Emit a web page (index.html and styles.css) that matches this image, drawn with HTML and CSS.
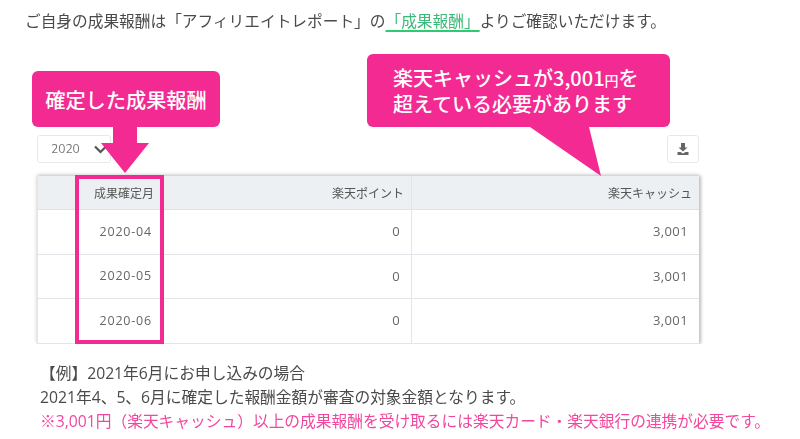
FILE: index.html
```html
<!DOCTYPE html>
<html lang="ja">
<head>
<meta charset="utf-8">
<title>成果報酬</title>
<link rel="stylesheet" href="styles.css">
</head>
<body>
<p class="lead">ご自身の成果報酬は「アフィリエイトレポート」の<a class="link" href="#">「成果報酬」</a>よりご確認いただけます。</p>
<figure class="shot">
  <div class="toolbar">
    <div class="select"><span>2020</span>
      <svg class="chev" width="13" height="9" viewBox="0 0 13 9"><path d="M1 1.500 6.500 7 12 1.500" fill="none" stroke="#555" stroke-width="2.200"/></svg>
    </div>
    <button class="dl" type="button" aria-label="download">
      <svg width="14" height="14" viewBox="0 0 14 14"><path d="M5 1h4v4.500h2.500L7 9.500 2.500 5.500H5z" fill="#666"/><path d="M1.500 10h3L7 11.500 9.500 10h3v3h-11z" fill="#666"/></svg>
    </button>
  </div>
  <div class="table">
    <div class="row head"><div class="cell">成果確定月</div><div class="cell">楽天ポイント</div><div class="cell">楽天キャッシュ</div></div>
    <div class="row"><div class="cell date">2020-04</div><div class="cell num">0</div><div class="cell num">3,001</div></div>
    <div class="row"><div class="cell date">2020-05</div><div class="cell num">0</div><div class="cell num">3,001</div></div>
    <div class="row"><div class="cell date">2020-06</div><div class="cell num">0</div><div class="cell num">3,001</div></div>
  </div>
  <div class="highlight"></div>
  <div class="callout c1">確定した成果報酬</div>
  <svg class="arrow" width="48" height="47" viewBox="0 0 48 47"><path d="M12 0h24v16h12L24 46 0 16h12z" fill="#f22a92"/></svg>
  <div class="callout c2">楽天キャッシュが3,001<small>円</small>を<br>超えている必要があります</div>
  <svg class="tail" width="73" height="50" viewBox="0 0 73 50"><path d="M0 0 71 49 59 0z" fill="#f22a92"/></svg>
</figure>
<div class="notes">
  <p class="ex">【例】2021年6月にお申し込みの場合</p>
  <p>2021年4、5、6月に確定した報酬金額が審査の対象金額となります。</p>
  <p class="warn">※3,001円（楽天キャッシュ）以上の成果報酬を受け取るには楽天カード・楽天銀行の連携が必要です。</p>
</div>
</body>
</html>
```
FILE: styles.css
```css
* { box-sizing: border-box; }
html, body { margin: 0; height: 439px; overflow: hidden; background: #fff; }
body {
  font-family: "Open Sans", "Noto Sans CJK JP", sans-serif;
  font-size: 15.700px;
  line-height: 24px;
  color: #4a4a4a;
}
p { margin: 0; }
.lead { padding: 9px 0 0 25px; white-space: nowrap; height: 33px; filter: blur(0.3px); }
.link { color: #3cb878; text-decoration: underline; text-decoration-color: #2ecc71; text-decoration-thickness: 1.500px; text-underline-offset: 3px; }
.shot {
  position: relative;
  margin: 0;
  padding: 102px 101px 0 37px;
  height: 311px;
  filter: blur(0.35px);
}
.toolbar { display: flex; justify-content: space-between; height: 28px; margin-bottom: 13px; }
.select {
  width: 74px;
  border: 1px solid #e8e8e8;
  border-radius: 3px;
  display: flex;
  align-items: center;
  gap: 14px;
  padding-left: 13px;
  font: 12px/1 "Nunito", "Open Sans", sans-serif;
  color: #777;
}
.dl {
  width: 32px;
  border: 1px solid #e8e8e8;
  border-radius: 3px;
  background: #fff;
  padding: 0;
  display: flex;
  align-items: center;
  justify-content: center;
}
.table {
  height: 168px;
  overflow: hidden;
  border-left: 1px solid #e4e4e8;
  box-shadow: 2px 0 3px #c4c4c4, 0 -1px 4px #ccc;
  clip-path: inset(-6px -6px 0 -6px);
  background: #fff;
}
.row {
  display: grid;
  grid-template-columns: 125px 249px 1fr;
  height: 44.500px;
  border-bottom: 1px solid #e4e4ea;
}
.row.head { height: 34px; background: #edf0f2; font-family: "Noto Sans CJK JP", sans-serif; font-size: 12px; border-bottom: 1px solid #e0e2e6; }
.head .cell { padding-right: 7px; }
.head .cell:first-child { padding-right: 8px; }
.cell {
  display: flex;
  align-items: center;
  justify-content: flex-end;
  padding-right: 9px;
  border-right: 1px solid #e4e4ea;
  color: #555;
}
.cell:last-child { border-right: 0; }
.date, .num { font: 12.500px/1 "Open Sans", sans-serif; letter-spacing: 0.4px; color: #666; }
.date { font-weight: 500; letter-spacing: 0.8px; padding-right: 10px; }
.num { padding-right: 11px; font-size: 13px; }
.highlight {
  position: absolute;
  left: 75px;
  top: 142px;
  width: 89px;
  height: 169px;
  border: 4px solid #f22a92;
}
.callout {
  position: absolute;
  background: #f22a92;
  color: #fff;
  border-radius: 6px;
  font-family: "Noto Sans CJK JP", sans-serif;
  font-weight: 500;
  font-size: 20.200px;
}
.c1 { left: 32px; top: 38px; width: 188px; height: 56px; line-height: 57px; text-align: center; }
.c2 { left: 367px; top: 21px; width: 303px; height: 73px; line-height: 24px; padding: 12px 0 0 26px; font-size: 20px; white-space: nowrap; }
.c2 small { font-size: 14px; }
.arrow { position: absolute; left: 101px; top: 94px; }
.tail { position: absolute; left: 530px; top: 94px; }
.notes { padding: 17px 0 0 40px; font-size: 15.720px; white-space: nowrap; filter: blur(0.3px); }
.warn { color: #f2479f; }
```
